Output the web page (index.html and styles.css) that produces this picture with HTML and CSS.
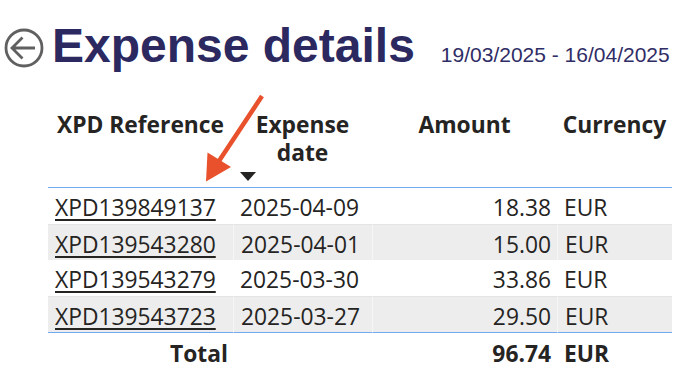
FILE: index.html
```html
<!DOCTYPE html>
<html>
<head>
<meta charset="utf-8">
<link rel="stylesheet" href="styles.css">
</head>
<body>
<div class="page">
  <header class="head">
    <svg class="back" width="40" height="40" viewBox="0 0 40 40">
      <circle cx="20" cy="20" r="18" fill="none" stroke="#606060" stroke-width="2.8"/>
      <path d="M8 20 H31 M18.5 9.5 L8 20 L18.5 30.5" fill="none" stroke="#606060" stroke-width="2.8" stroke-linecap="butt" stroke-linejoin="miter"/>
    </svg>
    <h1 class="title">Expense details</h1>
    <span class="range">19/03/2025 - 16/04/2025</span>
  </header>

  <table class="grid">
    <colgroup>
      <col class="c1"><col class="c2"><col class="c3"><col class="c4">
    </colgroup>
    <thead>
      <tr>
        <th>XPD Reference</th>
        <th class="sorted">Expense<br>date<span class="sort"></span></th>
        <th>Amount</th>
        <th>Currency</th>
      </tr>
    </thead>
    <tbody>
      <tr><td><a class="ref">XPD139849137</a></td><td>2025-04-09</td><td class="num">18.38</td><td>EUR</td></tr>
      <tr class="alt"><td><a class="ref">XPD139543280</a></td><td>2025-04-01</td><td class="num">15.00</td><td>EUR</td></tr>
      <tr><td><a class="ref">XPD139543279</a></td><td>2025-03-30</td><td class="num">33.86</td><td>EUR</td></tr>
      <tr class="alt"><td><a class="ref">XPD139543723</a></td><td>2025-03-27</td><td class="num">29.50</td><td>EUR</td></tr>
    </tbody>
    <tfoot>
      <tr><td class="total-label">Total</td><td></td><td class="num">96.74</td><td>EUR</td></tr>
    </tfoot>
  </table>

  <svg class="annot" width="676" height="378" viewBox="0 0 676 378">
    <line x1="262" y1="96" x2="219" y2="161" stroke="#e8512b" stroke-width="4.5"/>
    <polygon points="207.5,152.5 231,167 206,181.5" fill="#e8512b"/>
  </svg>
</div>
</body>
</html>
```

FILE: styles.css
```css
html, body {
  margin: 0;
  padding: 0;
  background: #ffffff;
}

.page {
  position: relative;
  width: 676px;
  height: 378px;
  overflow: hidden;
}

.head {
  display: flex;
  align-items: baseline;
  padding: 22px 0 0 4px;
  height: 48px;
}

.back {
  align-self: center;
  margin-top: 3px;
  flex: none;
}

.title {
  margin: 0 0 0 8px;
  font-family: "Liberation Sans", Arial, sans-serif;
  font-weight: bold;
  font-size: 48px;
  line-height: 48px;
  color: #2b2960;
}

.range {
  margin-left: 26px;
  font-family: "Liberation Sans", Arial, sans-serif;
  font-size: 21px;
  color: #2f2d66;
}

.grid {
  margin: 30px 0 0 48px;
  width: 624px;
  border-collapse: separate;
  border-spacing: 0;
  table-layout: fixed;
  font-family: "Open Sans", "Noto Sans", sans-serif;
  font-size: 22.8px;
  color: #252423;
}

.c1 { width: 185px; }
.c2 { width: 139px; }
.c3 { width: 185px; }
.c4 { width: 115px; }

.grid th {
  font-weight: bold;
  text-align: center;
  vertical-align: top;
  line-height: 28.4px;
  padding: 11px 2px 19px;
  border-bottom: 1px solid #72a8ee;
  white-space: nowrap;
}

.grid th.sorted {
  position: relative;
}

.sort {
  position: absolute;
  left: 7px;
  bottom: 6px;
  width: 0;
  height: 0;
  border-left: 8px solid transparent;
  border-right: 8px solid transparent;
  border-top: 9px solid #252423;
}

.grid td {
  height: 36px;
  padding: 5px 6px 0 7px;
  line-height: 28px;
  vertical-align: middle;
  white-space: nowrap;
  box-sizing: border-box;
}

.grid tbody tr.alt td {
  background: #ededed;
  border-top: 1px solid #e4e4e4;
}

.grid tbody tr.alt td + td {
  border-left: 1px solid #f6f6f6;
}

.grid tbody tr:last-child td {
  border-bottom: 1px solid #72a8ee;
  height: 37px;
}

.grid td.num {
  text-align: right;
}

.ref {
  color: #252423;
  text-decoration: underline;
  text-decoration-thickness: 2px;
  text-underline-offset: 3px;
}

.grid tfoot td {
  font-weight: bold;
  height: 38px;
}

.grid td.total-label {
  text-align: right;
  padding-right: 5px;
}

.annot {
  position: absolute;
  left: 0;
  top: 0;
  pointer-events: none;
}
```
